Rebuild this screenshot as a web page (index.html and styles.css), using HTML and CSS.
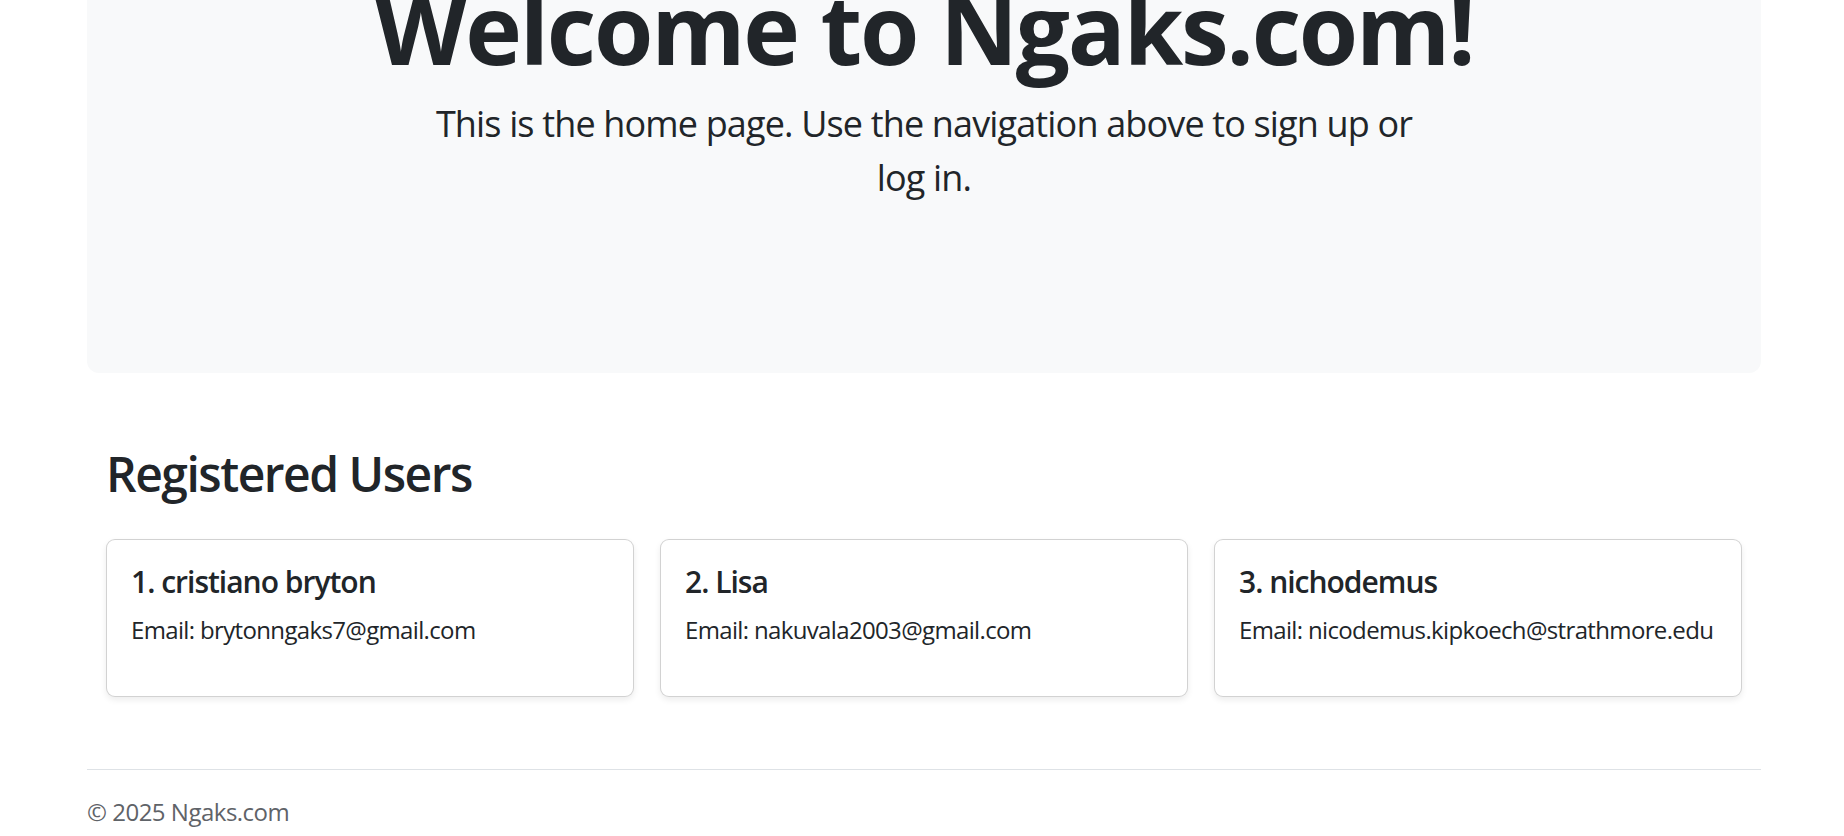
FILE: index.html
```html
<!DOCTYPE html>
<html lang="en">
<head>
<meta charset="utf-8">
<title>Ngaks.com</title>
<link rel="stylesheet" href="styles.css">
</head>
<body>
<main class="page">
  <section class="hero">
    <div class="hero-inner">
      <h1 class="hero-title">Welcome to Ngaks.com!</h1>
      <p class="lead">This is the home page. Use the navigation above to sign up or log in.</p>
    </div>
  </section>

  <section class="users">
    <h2 class="users-title">Registered Users</h2>
    <div class="user-grid">
      <div class="card">
        <h5 class="card-title">1. cristiano bryton</h5>
        <p class="card-text">Email: brytonngaks7@gmail.com</p>
      </div>
      <div class="card">
        <h5 class="card-title">2. Lisa</h5>
        <p class="card-text">Email: nakuvala2003@gmail.com</p>
      </div>
      <div class="card">
        <h5 class="card-title">3. nichodemus</h5>
        <p class="card-text">Email: nicodemus.kipkoech@strathmore.edu</p>
      </div>
    </div>
  </section>

  <footer class="site-footer">
    <p class="copyright">© 2025 Ngaks.com</p>
  </footer>
</main>
</body>
</html>
```
FILE: styles.css
```css
html, body {
  margin: 0;
  padding: 0;
}

body {
  font-family: "Open Sans", "Noto Sans", sans-serif;
  color: #212529;
  background: #ffffff;
}

.page {
  margin: -174px 83px 0 87px;
}

.hero {
  background: #f8f9fa;
  border-radius: 12px;
  padding: 72px;
}

.hero-inner {
  padding: 72px 0;
  text-align: center;
}

.hero-title {
  font-size: 96px;
  font-weight: 700;
  line-height: 1.2;
  letter-spacing: -2.2px;
  margin: 0 0 12px;
}

.lead {
  font-size: 36px;
  line-height: 1.5;
  letter-spacing: -0.85px;
  max-width: 1000px;
  margin: 0 auto 24px;
}

.users {
  margin-top: 72px;
  padding: 0 19px;
}

.users-title {
  font-size: 48px;
  font-weight: 600;
  line-height: 1.2;
  letter-spacing: -1.5px;
  margin: 0 0 36px;
}

.user-grid {
  display: grid;
  grid-template-columns: repeat(3, 1fr);
  gap: 26px;
}

.card {
  background: #fff;
  border: 1px solid rgba(0, 0, 0, 0.175);
  border-radius: 9px;
  box-shadow: 0 3px 6px rgba(0, 0, 0, 0.075);
  padding: 24px;
}

.card-title {
  font-size: 30px;
  font-weight: 600;
  line-height: 1.2;
  letter-spacing: -1px;
  margin: 0 0 12px;
}

.card-text {
  font-size: 24px;
  line-height: 1.5;
  letter-spacing: -0.65px;
  margin: 0 0 24px;
}

.site-footer {
  margin-top: 72px;
  border-top: 1px solid #dee2e6;
  padding-top: 24px;
}

.copyright {
  font-size: 24px;
  line-height: 1.5;
  letter-spacing: -0.5px;
  color: #5f6368;
  margin: 0;
}
```
